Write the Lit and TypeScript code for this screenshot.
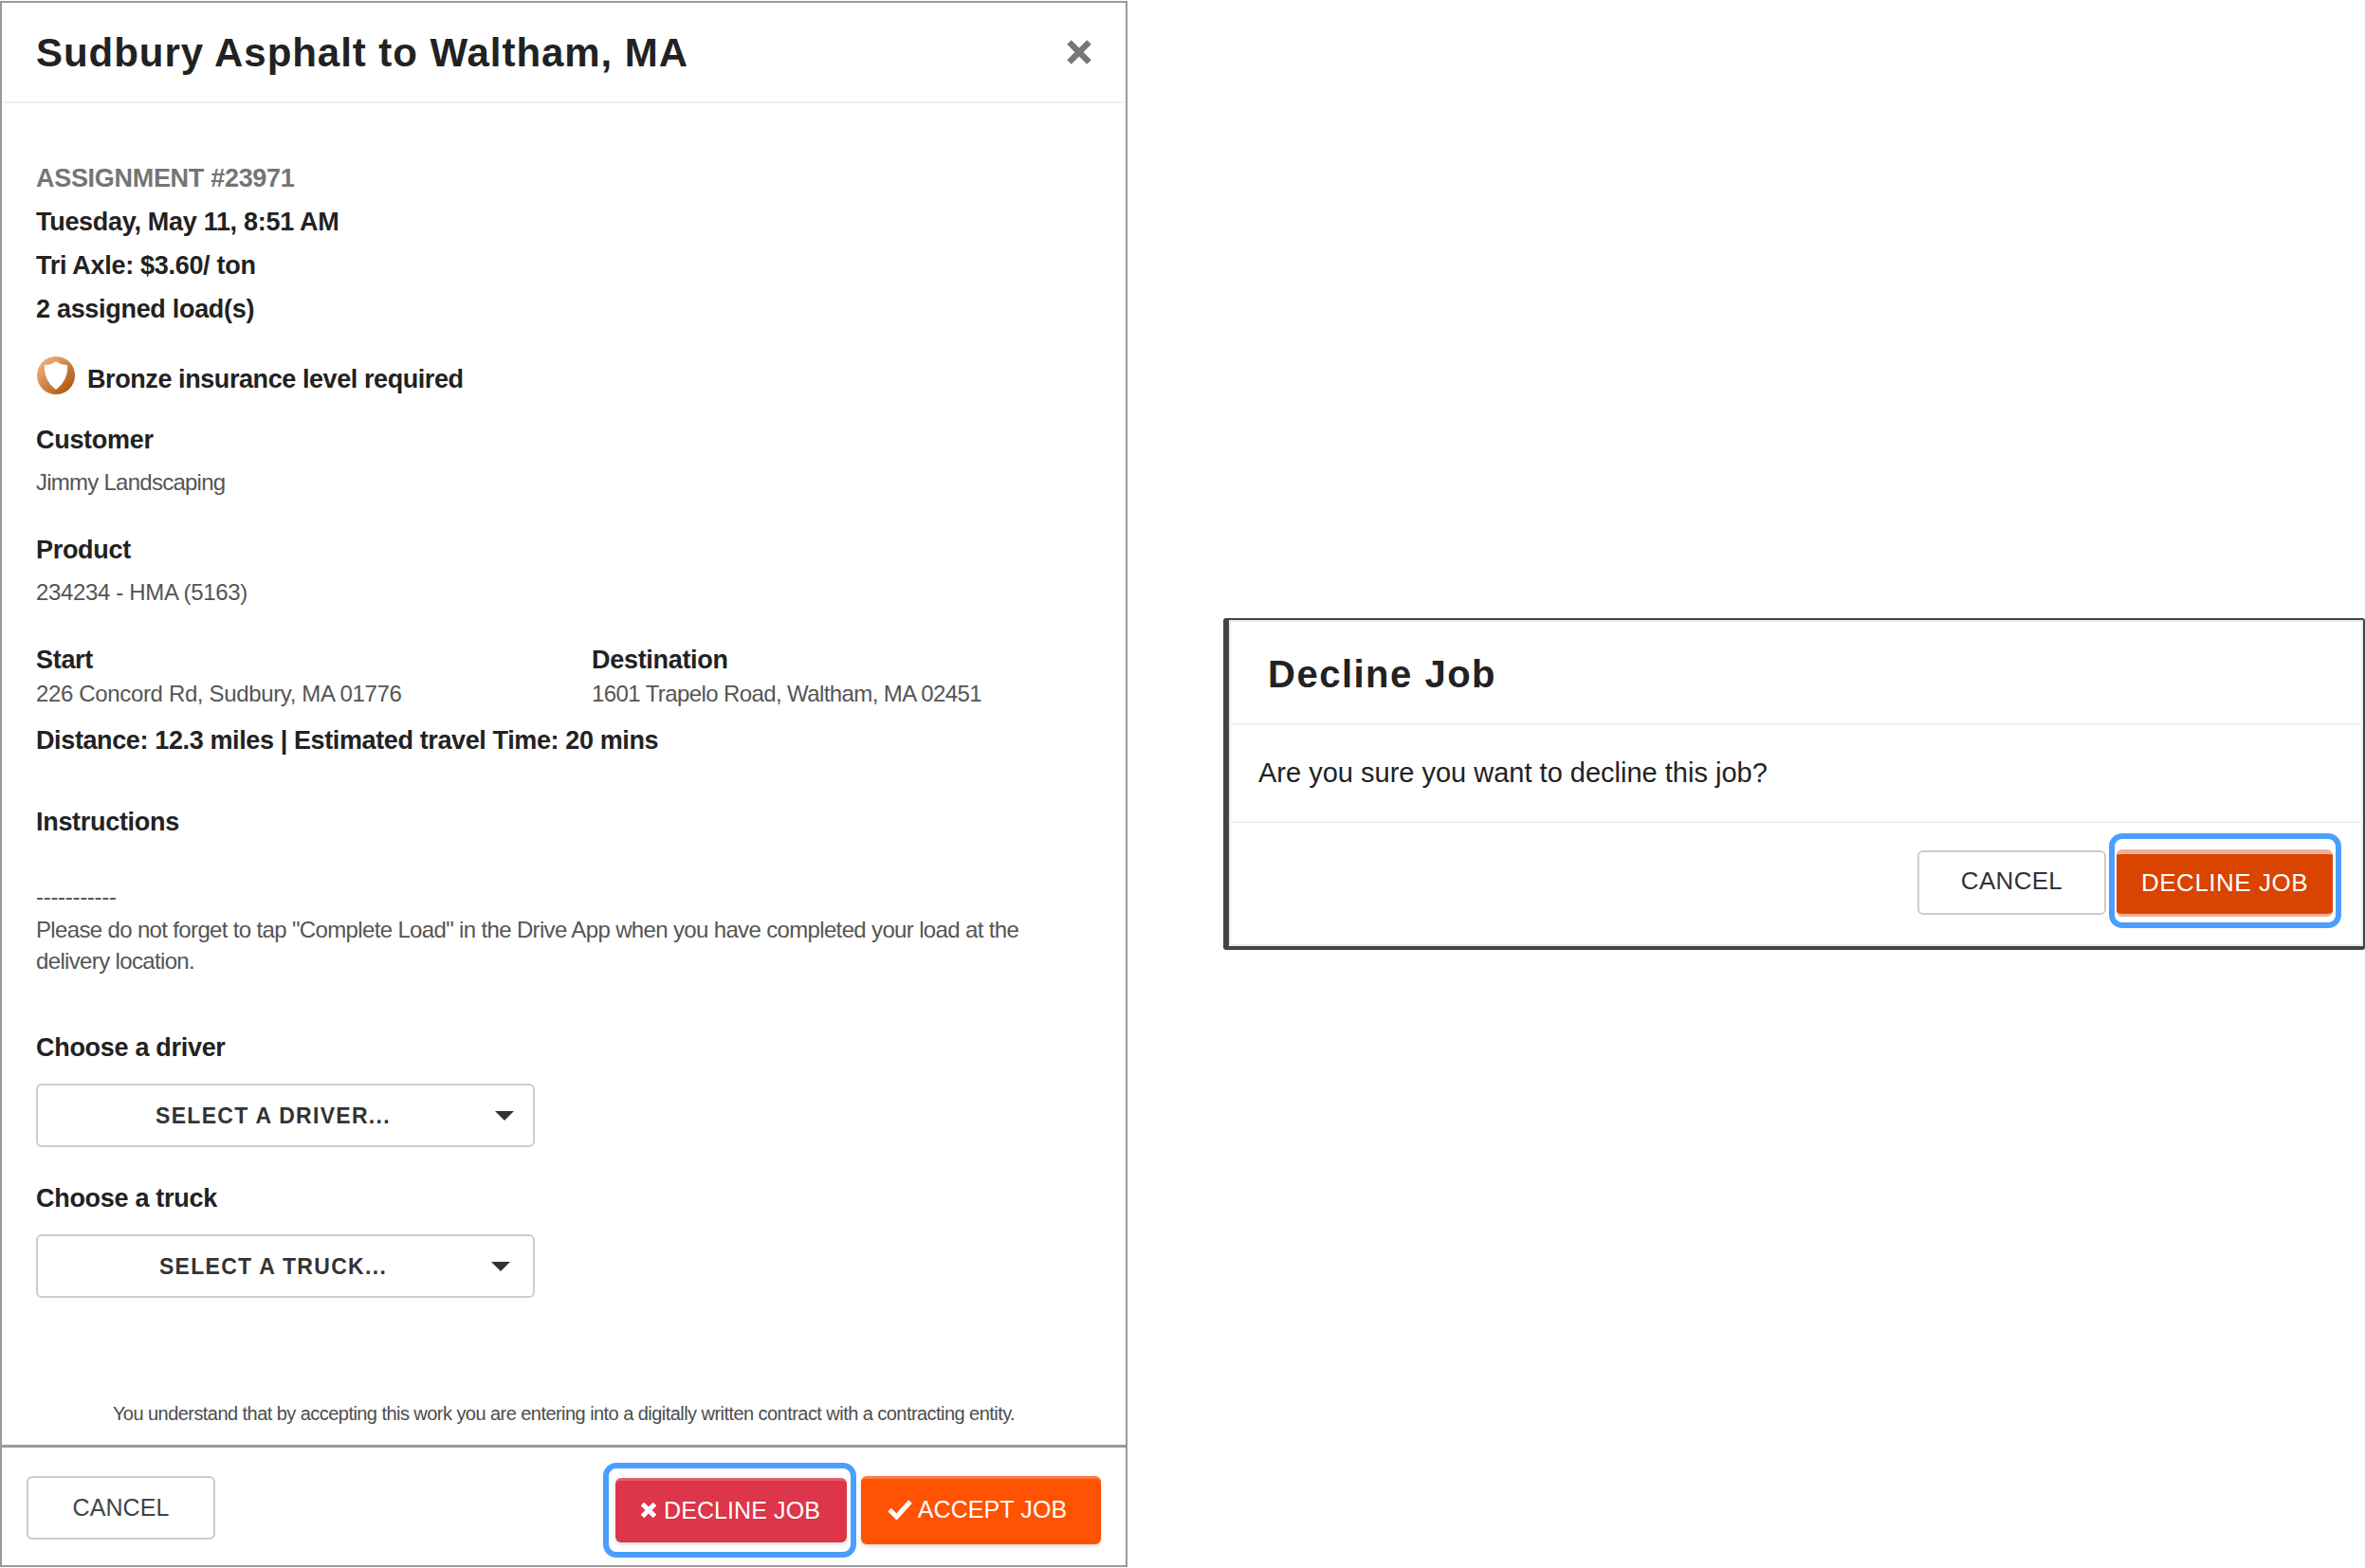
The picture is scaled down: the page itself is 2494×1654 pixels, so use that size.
import { LitElement, html, css } from "lit";
import { customElement } from "lit/decorators.js";

@customElement("app-root")
export class AppRoot extends LitElement {
  static styles = css`
    :host { display: block; width: 2494px; height: 1654px; background: #fff; font-family: "Liberation Sans", Arial, sans-serif; color: #222; overflow: hidden; }
    .page { display: flex; align-items: flex-start; height: 1654px; box-sizing: border-box; }
    .main { box-sizing: border-box; width: 1189px; height: 1652px; margin-top: 1px; border: 2px solid #999; display: flex; flex-direction: column; flex: none; }
    .head { height: 106px; flex: none; box-sizing: border-box; border-bottom: 2px solid #f0f0f0; padding: 2px 36px 0; display: flex; align-items: center; justify-content: space-between; }
    h1 { margin: 0; font-size: 42px; font-weight: 700; letter-spacing: 0.95px; line-height: 1; }
    .close { width: 28px; height: 28px; margin-right: -1px; margin-top: -3px; }
    .body { flex: 1; padding: 0 36px; position: relative; }
    .row { font-weight: 700; font-size: 27px; line-height: 46px; letter-spacing: -0.3px; }
    .grey { color: #757575; margin-top: 56px; }
    .ins { display: flex; align-items: center; gap: 13px; margin-top: 26px; height: 50px; letter-spacing: -0.42px; }
    .ins svg { width: 40px; height: 40px; flex: none; margin: -8px 0 0 1px; }
    .lite { font-size: 24px; line-height: 34px; color: #555; letter-spacing: -0.6px; }
    .customer { margin-top: 16px; }
    .jimmy { margin-top: 5px; letter-spacing: -0.75px; }
    .product { margin-top: 31px; }
    .code { margin-top: 5px; letter-spacing: -0.35px; }
    .cols { display: flex; margin-top: 36px; }
    .col { width: 586px; flex: none; }
    .tight { line-height: 36px; }
    .addr-a { letter-spacing: -0.35px; }
    .addr-b { letter-spacing: -0.6px; }
    .distance { margin-top: 8px; letter-spacing: -0.38px; }
    .instructions { margin-top: 40px; }
    .dashes { margin-top: 43px; line-height: 26px; letter-spacing: -0.3px; }
    .note { line-height: 33px; margin-top: 5px; letter-spacing: -0.65px; }
    .driver { margin-top: 52px; }
    .truck { margin-top: 31px; }
    .sel { box-sizing: border-box; width: 526px; height: 67px; border: 2px solid #ccc; border-radius: 6px; padding: 1px 26px 0 0; display: flex; align-items: center; justify-content: center; position: relative; font-weight: 700; font-size: 23px; letter-spacing: 1.3px; color: #333; margin-top: 15px; }
    .caret { position: absolute; top: 27px; width: 0; height: 0; border-left: 10px solid transparent; border-right: 10px solid transparent; border-top: 10px solid #333; }
    .caret-a { right: 20px; }
    .caret-b { right: 24px; }
    .legal { position: absolute; left: 0; right: 0; bottom: 19px; text-align: center; font-size: 20px; line-height: 28px; color: #4d4d4d; letter-spacing: -0.55px; }
    .foot { height: 127px; flex: none; box-sizing: border-box; border-top: 3px solid #999; display: flex; align-items: flex-start; padding: 30px 26px 0 26px; }
    .btn { box-sizing: border-box; border-radius: 6px; display: flex; align-items: center; justify-content: center; font-size: 25px; letter-spacing: 0.1px; flex: none; }
    .cancel { width: 199px; height: 67px; border: 2px solid #ccc; color: #444; background: #fff; margin-right: auto; }
    .ring { box-sizing: border-box; width: 267px; height: 100px; border: 6px solid #4a9eff; border-radius: 14px; padding: 10px 4px 10px 7px; margin-top: -14px; flex: none; }
    .decline { width: 244px; height: 68px; padding: 0 3px 3px 0; background: #dd3549; color: #fff; gap: 6px; border-top: 3px solid #e55c6c; box-shadow: 0 2px 4px rgba(0,0,0,.15); }
    .accept { width: 253px; height: 72px; padding: 0 8px 5px 0; background: #ff5203; color: #fff; gap: 6px; margin-left: 5px; border-top: 3px solid #ff7a3f; box-shadow: 0 2px 4px rgba(0,0,0,.15); }
    .decline svg { width: 20px; height: 20px; flex: none; }
    .accept svg { width: 26px; height: 22px; flex: none; }
    .side { box-sizing: border-box; width: 1204px; height: 350px; margin: 652px 0 0 101px; border: 2px solid #444; border-left-width: 6px; border-bottom-width: 4px; border-radius: 3px; box-shadow: inset 0 0 0 2px #ececec; flex: none; display: flex; flex-direction: column; }
    .shead { height: 111px; flex: none; box-sizing: border-box; border-bottom: 2px solid #f0f0f0; padding: 4px 0 0 41px; display: flex; align-items: center; }
    .shead h2 { margin: 0; font-size: 40px; font-weight: 700; letter-spacing: 1.5px; line-height: 1; }
    .sbody { height: 103px; flex: none; box-sizing: border-box; border-bottom: 2px solid #f0f0f0; padding: 0 0 0 31px; display: flex; align-items: center; font-size: 29px; color: #222; }
    .sfoot { flex: 1; display: flex; justify-content: flex-end; align-items: flex-start; padding: 11px 23px 0 0; }
    .scancel { width: 199px; height: 68px; padding-bottom: 3px; border: 2px solid #ccc; color: #333; background: #fff; margin-top: 18px; font-size: 26px; letter-spacing: 0.3px; }
    .sring { box-sizing: border-box; width: 245px; height: 100px; border: 6px solid #4a9eff; border-radius: 14px; padding: 11px 3px 6px 2px; margin-left: 3px; flex: none; }
    .sdecline { width: 228px; height: 71px; padding-bottom: 2px; background: #d94400; color: #fff; font-size: 26px; letter-spacing: 0.5px; border-top: 5px solid; border-bottom: 3px solid; border-color: #f3ae96; }
  `;
  render() {
    const x = html`<svg viewBox="0 0 20 20"><path d="M3.5 3.5 L16.5 16.5 M16.5 3.5 L3.5 16.5" stroke="#fff" stroke-width="5" fill="none"/></svg>`;
    const check = html`<svg viewBox="0 0 26 22"><path d="M2 11.5 L9.5 19 L24 3" stroke="#fff" stroke-width="5" fill="none"/></svg>`;
    return html`<div class="page">
      <section class="main">
        <header class="head">
          <h1>Sudbury Asphalt to Waltham, MA</h1>
          <svg class="close" viewBox="0 0 24 24"><path d="M3 3 L21 21 M21 3 L3 21" stroke="#777" stroke-width="5.5" fill="none"/></svg>
        </header>
        <div class="body">
          <div class="row grey">ASSIGNMENT #23971</div>
          <div class="row">Tuesday, May 11, 8:51 AM</div>
          <div class="row">Tri Axle: $3.60/ ton</div>
          <div class="row">2 assigned load(s)</div>
          <div class="row ins">
            <svg viewBox="0 0 40 40">
              <defs><linearGradient id="b" x1="0" y1="0" x2="1" y2="1"><stop offset="0" stop-color="#f7bd8d"/><stop offset="1" stop-color="#a34a00"/></linearGradient></defs>
              <circle cx="20" cy="20" r="20" fill="url(#b)"/>
              <path d="M20 5 C24 8 28 9 32 9 C33 20 28 29 20 35 C12 29 7 20 8 9 C12 9 16 8 20 5 Z" fill="#fff"/>
            </svg>
            <span>Bronze insurance level required</span>
          </div>
          <div class="row customer">Customer</div>
          <div class="lite jimmy">Jimmy Landscaping</div>
          <div class="row product">Product</div>
          <div class="lite code">234234 - HMA (5163)</div>
          <div class="cols">
            <div class="col"><div class="row tight">Start</div><div class="lite tight addr-a">226 Concord Rd, Sudbury, MA 01776</div></div>
            <div class="col"><div class="row tight">Destination</div><div class="lite tight addr-b">1601 Trapelo Road, Waltham, MA 02451</div></div>
          </div>
          <div class="row distance">Distance: 12.3 miles | Estimated travel Time: 20 mins</div>
          <div class="row instructions">Instructions</div>
          <div class="lite dashes">-----------</div>
          <div class="lite note">Please do not forget to tap "Complete Load" in the Drive App when you have completed your load at the<br>delivery location.</div>
          <div class="row driver">Choose a driver</div>
          <div class="sel">SELECT A DRIVER...<span class="caret caret-a"></span></div>
          <div class="row truck">Choose a truck</div>
          <div class="sel">SELECT A TRUCK...<span class="caret caret-b"></span></div>
          <div class="legal">You understand that by accepting this work you are entering into a digitally written contract with a contracting entity.</div>
        </div>
        <footer class="foot">
          <div class="btn cancel">CANCEL</div>
          <div class="ring"><div class="btn decline">${x}DECLINE JOB</div></div>
          <div class="btn accept">${check}ACCEPT JOB</div>
        </footer>
      </section>
      <section class="side">
        <div class="shead"><h2>Decline Job</h2></div>
        <div class="sbody">Are you sure you want to decline this job?</div>
        <div class="sfoot">
          <div class="btn scancel">CANCEL</div>
          <div class="sring"><div class="btn sdecline">DECLINE JOB</div></div>
        </div>
      </section>
    </div>`;
  }
}
